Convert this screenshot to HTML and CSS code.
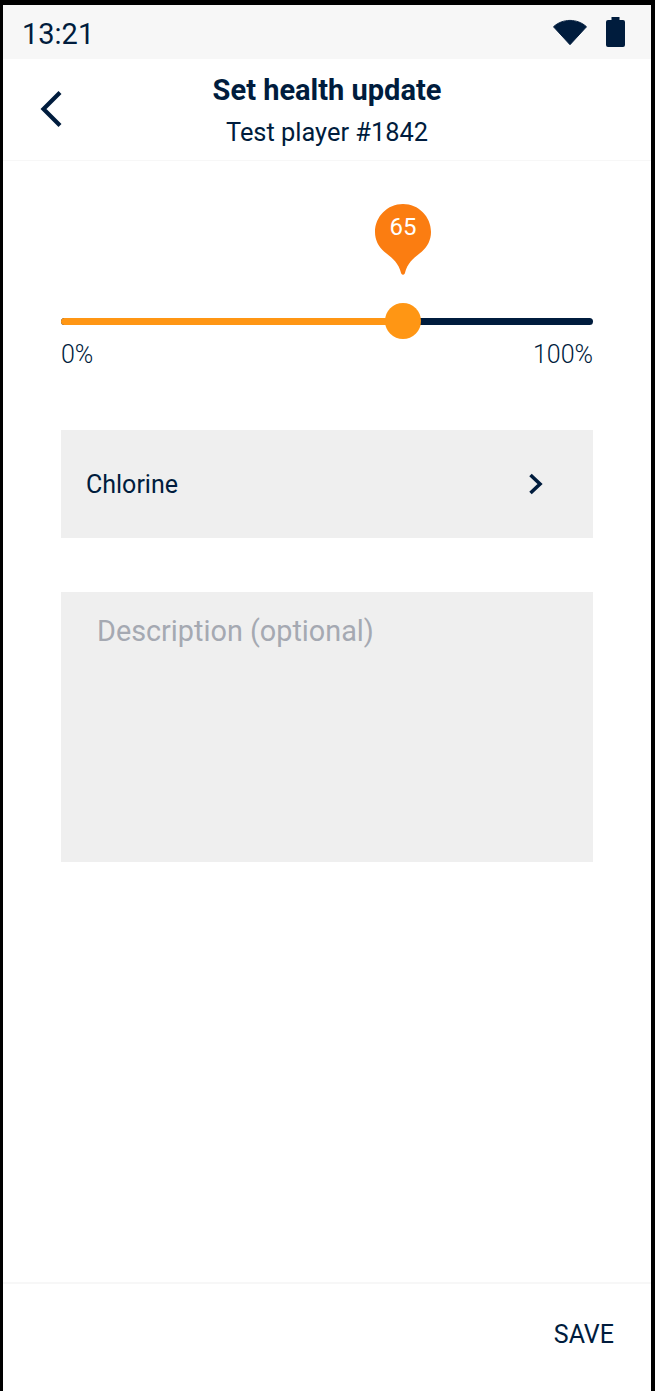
FILE: index.html
```html
<!DOCTYPE html>
<html lang="en">
<head>
    <meta charset="UTF-8">
    <meta name="viewport" content="width=device-width, initial-scale=1.0">
    <title>Set health update</title>
    <link rel="stylesheet" href="styles.css">
</head>
<body>
    <div class="screen">
        <div class="status-bar">
            <span class="clock">13:21</span>
            <div class="status-icons">
                <svg class="wifi" width="34" height="29" viewBox="0 0 36 29"><path d="M0.5 9.5 C10 0.5 26 0.5 35.5 9.5 L18 28.5 Z" fill="#001c3d" stroke="#001c3d" stroke-linejoin="round"/></svg>
                <svg class="battery" width="19" height="30" viewBox="0 0 19 30"><path d="M5.5 0 H13.5 V3 H17 Q19 3 19 5 V28 Q19 30 17 30 H2 Q0 30 0 28 V5 Q0 3 2 3 H5.5 Z" fill="#001c3d"/></svg>
            </div>
        </div>

        <header class="top-bar">
            <button class="back-btn" aria-label="Back">
                <svg width="24" height="38" viewBox="0 0 24 38"><path d="M21 2.5 L4.500 19 L21 35.5" fill="none" stroke="#001c3d" stroke-width="4.200"/></svg>
            </button>
            <h1>Set health update</h1>
            <p class="player">Test player #1842</p>
        </header>

        <main class="content">
            <div class="slider">
                <div class="track">
                    <div class="track-fill" style="width: 64.3%"></div>
                    <div class="thumb" style="left: 64.3%"></div>
                    <div class="bubble" style="left: 64.3%">
                        <svg width="56" height="72" viewBox="0 0 56 72"><path d="M28 0 C43.5 0 56 12.5 56 28 C56 36 52.5 42.5 47 47.5 C40 53.500 33 57 29.800 69.500 Q28 72 26.200 69.500 C23 57 16 53.500 9 47.500 C3.500 42.500 0 36 0 28 C0 12.500 12.500 0 28 0 Z" fill="#fb7d11"/></svg>
                        <span class="bubble-value">65</span>
                    </div>
                </div>
                <div class="slider-labels">
                    <span>0%</span>
                    <span>100%</span>
                </div>
            </div>

            <div class="select-row">
                <span>Chlorine</span>
                <svg width="16" height="22" viewBox="0 0 16 22"><path d="M2.500 2 L12 11 L2.500 20" fill="none" stroke="#001c3d" stroke-width="3.600"/></svg>
            </div>

            <div class="description">Description (optional)</div>
        </main>

        <footer class="bottom-bar">
            <button class="save-btn">SAVE</button>
        </footer>
    </div>
</body>
</html>
```

FILE: styles.css
```css
:root {
    --navy: #001c3d;
    --orange: #ff9614;
    --field: #efefef;
    --line: #f7f7f7;
}

* {
    margin: 0;
    padding: 0;
    box-sizing: border-box;
}

html, body {
    height: 100%;
}

body {
    background: #000000;
    padding: 5px 4px 0 3px;
    font-family: Roboto, sans-serif;
    color: var(--navy);
}

.screen {
    height: 100%;
    background: #ffffff;
    display: flex;
    flex-direction: column;
}

.status-bar {
    height: 54px;
    flex-shrink: 0;
    background: #f7f7f7;
    display: flex;
    align-items: center;
    justify-content: space-between;
    padding: 0 26px 0 19px;
}

.clock {
    font-size: 29px;
    margin-top: 3px;
}

.status-icons {
    display: flex;
    align-items: flex-start;
    gap: 19px;
    margin-top: -1px;
}

.top-bar {
    position: relative;
    height: 102px;
    flex-shrink: 0;
    border-bottom: 1px solid var(--line);
    text-align: center;
    padding-top: 14px;
}

.top-bar h1 {
    font-size: 29px;
    font-weight: 700;
    line-height: 34px;
}

.player {
    font-size: 25.400px;
    margin-top: 9px;
    line-height: 32px;
}

.back-btn {
    position: absolute;
    left: 36px;
    top: 31px;
    background: none;
    border: none;
    display: flex;
}

.content {
    flex: 1;
    padding: 0 58px;
}

.slider {
    padding-top: 157px;
}

.track {
    position: relative;
    height: 7px;
    border-radius: 4px;
    background: var(--navy);
}

.track-fill {
    height: 100%;
    border-radius: 4px 0 0 4px;
    background: var(--orange);
}

.thumb {
    position: absolute;
    top: -15px;
    width: 36px;
    height: 36px;
    margin-left: -18px;
    border-radius: 50%;
    background: var(--orange);
}

.bubble {
    position: absolute;
    top: -114px;
    width: 56px;
    height: 72px;
    margin-left: -28px;
}

.bubble svg {
    display: block;
}

.bubble-value {
    position: absolute;
    top: 8px;
    left: 0;
    width: 100%;
    text-align: center;
    color: #ffffff;
    font-size: 24px;
    line-height: 30px;
}

.slider-labels {
    display: flex;
    justify-content: space-between;
    margin-top: 16px;
    font-size: 25px;
    font-weight: 300;
    line-height: 28px;
}

.select-row {
    height: 108px;
    margin-top: 61px;
    background: var(--field);
    display: flex;
    align-items: center;
    justify-content: space-between;
    padding: 0 49px 0 25px;
    font-size: 25px;
}

.description {
    height: 270px;
    margin-top: 54px;
    background: var(--field);
    padding: 21px 36px;
    font-size: 28.800px;
    line-height: 36px;
    color: #a5a9b2;
}

.bottom-bar {
    height: 109px;
    flex-shrink: 0;
    border-top: 2px solid var(--line);
    display: flex;
    justify-content: flex-end;
    padding: 35px 37px 0 0;
}

.save-btn {
    background: none;
    border: none;
    height: 30px;
    font-family: Roboto, sans-serif;
    font-size: 25px;
    color: var(--navy);
}
```
